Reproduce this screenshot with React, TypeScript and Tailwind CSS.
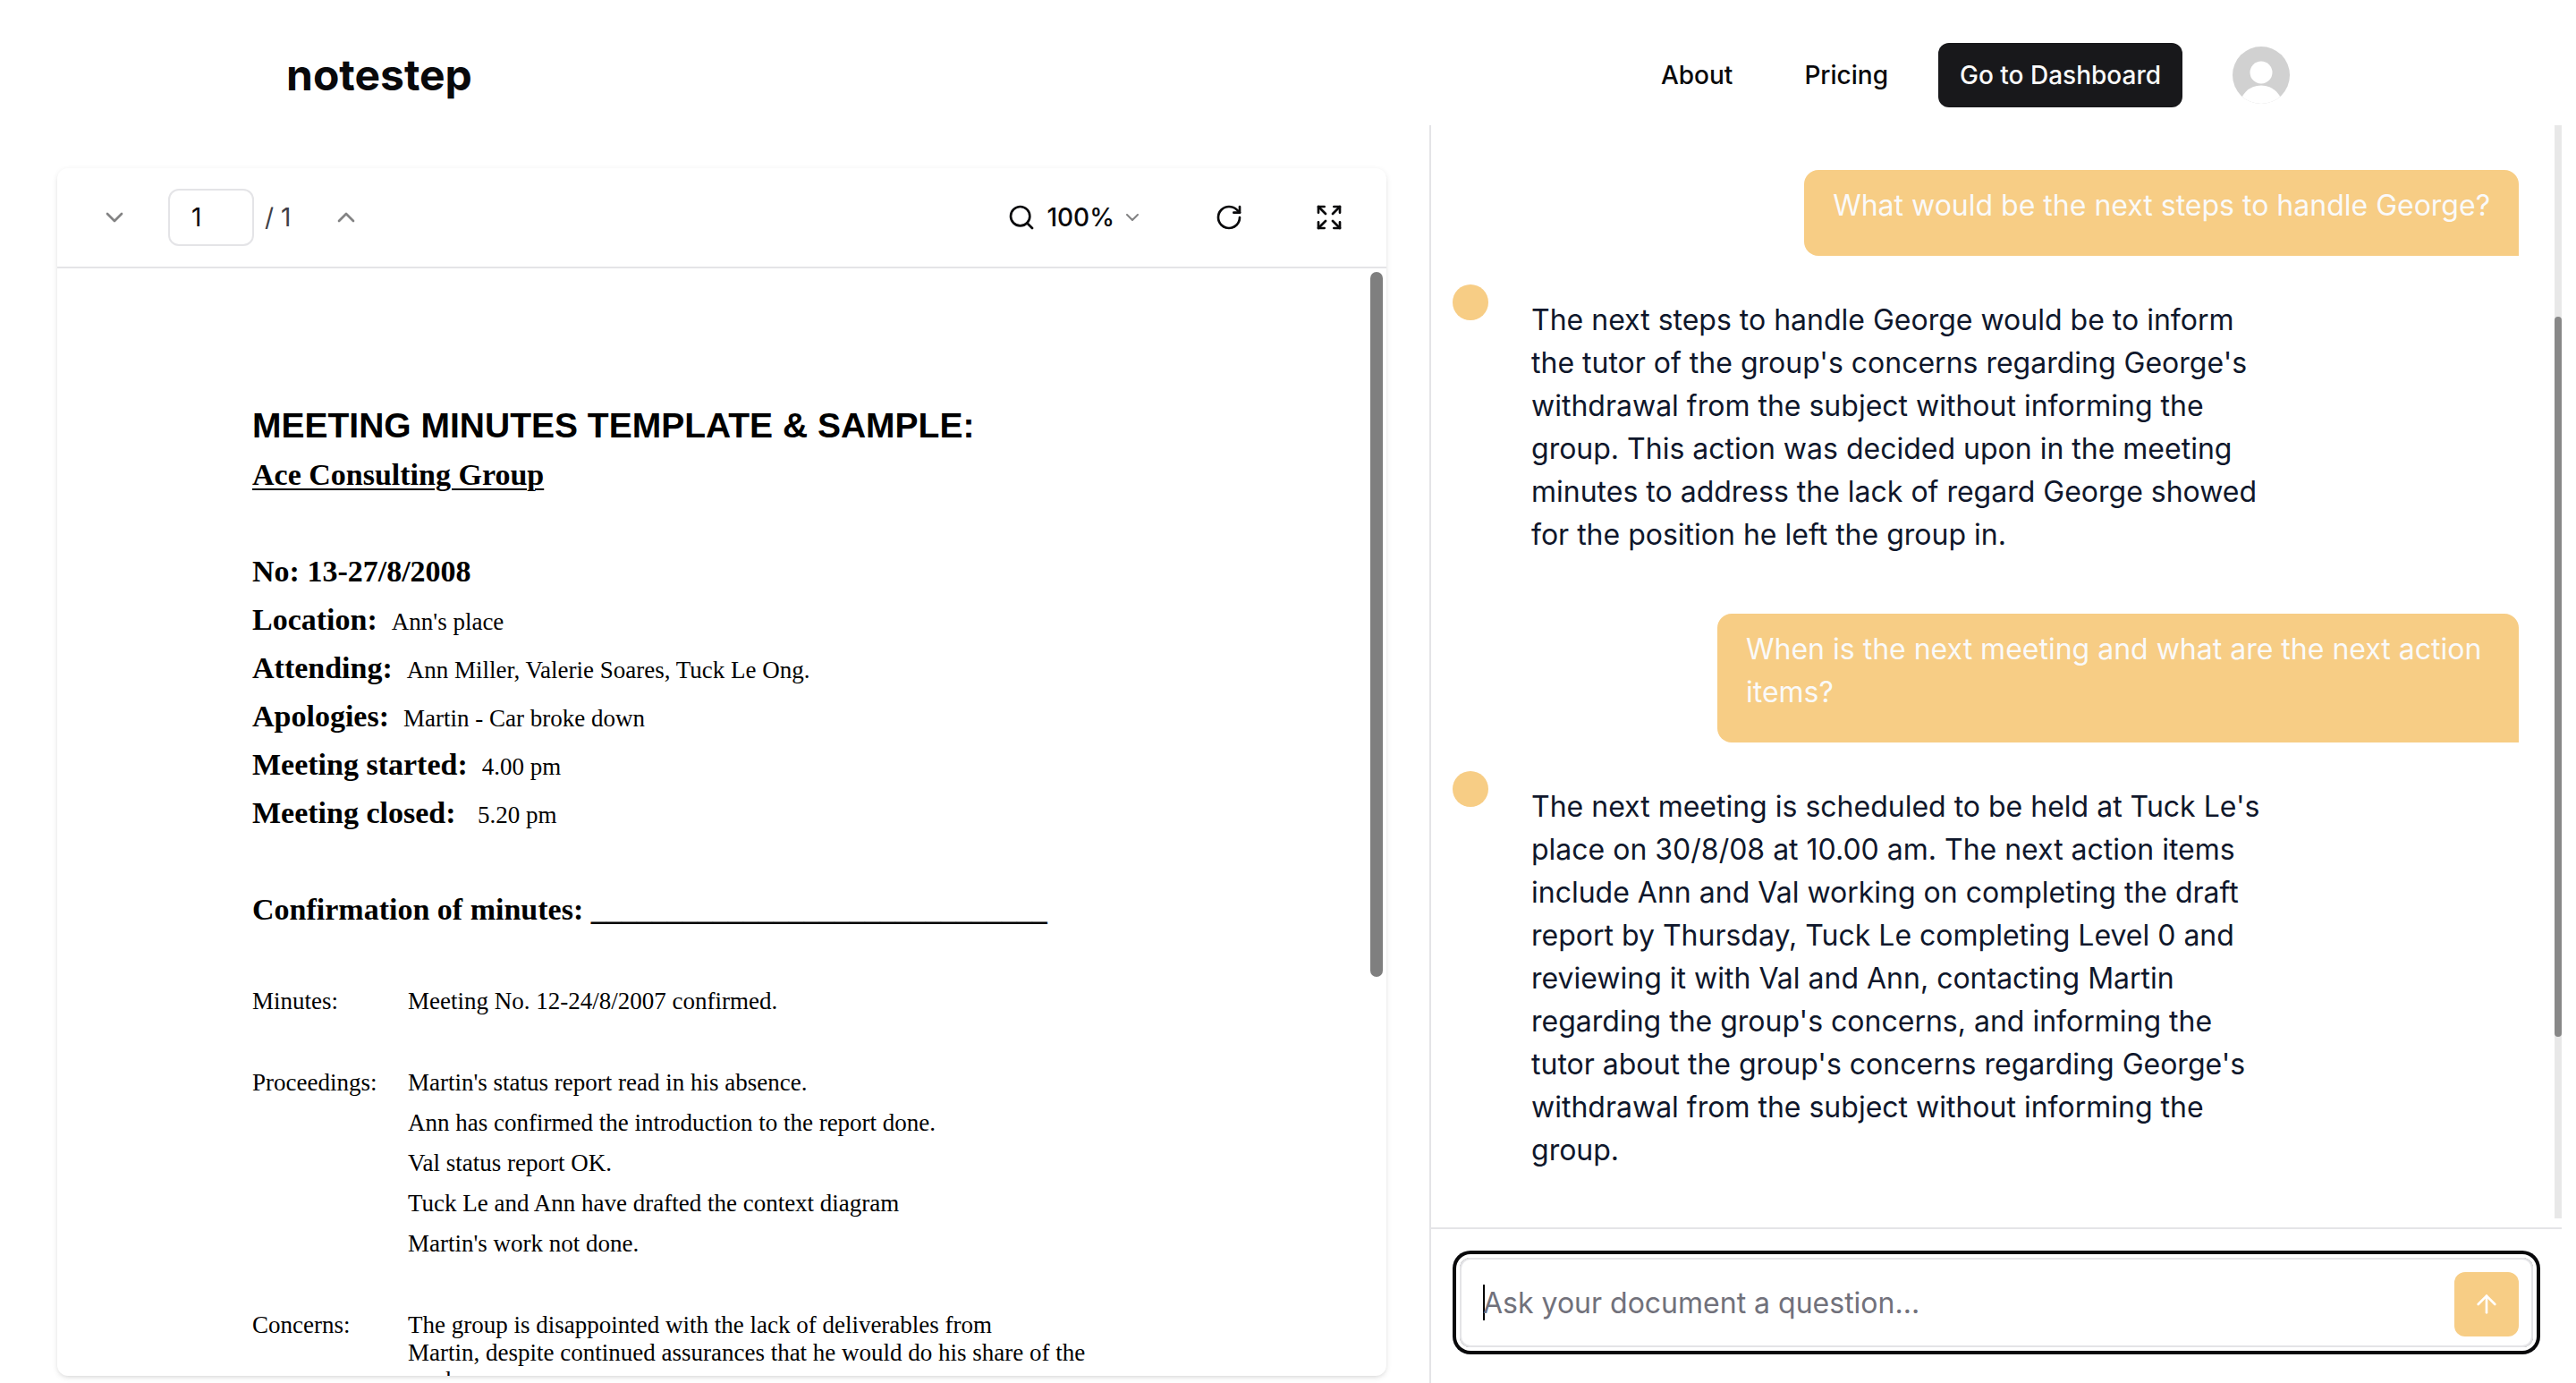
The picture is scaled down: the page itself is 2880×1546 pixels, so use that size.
import { ArrowUp, ChevronDown, ChevronUp, Expand, RotateCw, Search } from "lucide-react";
import type { ReactNode } from "react";

const DETAILS = [
  { label: "Location:", value: "Ann's place" },
  { label: "Attending:", value: "Ann Miller, Valerie Soares, Tuck Le Ong." },
  { label: "Apologies:", value: "Martin - Car broke down" },
  { label: "Meeting started:", value: "4.00 pm" },
  { label: "Meeting closed:\u00a0", value: "5.20 pm" },
];

const PROCEEDINGS = [
  "Martin's status report read in his absence.",
  "Ann has confirmed the introduction to the report done.",
  "Val status report OK.",
  "Tuck Le and Ann have drafted the context diagram",
  "Martin's work not done.",
];

const MESSAGES = [
  { from: "user", text: "What would be the next steps to handle George?" },
  {
    from: "bot",
    text: "The next steps to handle George would be to inform the tutor of the group's concerns regarding George's withdrawal from the subject without informing the group. This action was decided upon in the meeting minutes to address the lack of regard George showed for the position he left the group in.",
  },
  { from: "user", text: "When is the next meeting and what are the next action items?" },
  {
    from: "bot",
    text: "The next meeting is scheduled to be held at Tuck Le's place on 30/8/08 at 10.00 am. The next action items include Ann and Val working on completing the draft report by Thursday, Tuck Le completing Level 0 and reviewing it with Val and Ann, contacting Martin regarding the group's concerns, and informing the tutor about the group's concerns regarding George's withdrawal from the subject without informing the group.",
  },
];

function Header() {
  return (
    <header className="flex shrink-0 items-center justify-between px-80 pt-12 pb-5">
      <a href="#home" className="text-5xl font-bold">notestep</a>
      <nav className="flex items-center gap-14 text-[28px] leading-10 font-medium">
        <a href="#about" className="mr-6">About</a>
        <a href="#pricing">Pricing</a>
        <a href="#dashboard" className="flex h-18 items-center rounded-xl bg-zinc-900 px-6 text-zinc-50">
          Go to Dashboard
        </a>
        <button type="button" aria-label="Account" className="size-16 overflow-hidden rounded-full">
          <svg viewBox="0 0 64 64" className="size-16">
            <rect width="64" height="64" fill="#d1d1d1" />
            <circle cx="32" cy="29" r="12.5" fill="#fff" />
            <circle cx="32" cy="68" r="24.5" fill="#fff" />
          </svg>
        </button>
      </nav>
    </header>
  );
}

function Toolbar() {
  return (
    <div className="flex h-28 shrink-0 items-center justify-between border-b-2 border-zinc-200 px-4 text-[28px] leading-10">
      <div className="flex items-center">
        <button type="button" aria-label="Previous page" className="px-8 opacity-50">
          <ChevronDown size={32} />
        </button>
        <div className="ml-3 flex items-center gap-3">
          <input
            aria-label="Page number"
            defaultValue="1"
            className="h-16 w-24 rounded-xl border-2 border-zinc-200 px-6 outline-none"
          />
          <span className="text-zinc-700">/ 1</span>
        </div>
        <button type="button" aria-label="Next page" className="ml-3.5 px-8 opacity-50">
          <ChevronUp size={32} />
        </button>
      </div>
      <div className="flex items-center gap-4">
        <button type="button" aria-label="Zoom" className="flex items-center px-6 font-medium">
          <Search size={32} />
          <span className="ml-3">100%</span>
          <ChevronDown size={24} className="ml-2 opacity-50" />
        </button>
        <button type="button" aria-label="Rotate 90 degrees" className="pr-8 pl-10">
          <RotateCw size={32} />
        </button>
        <button type="button" aria-label="Fullscreen" className="px-8">
          <Expand size={32} />
        </button>
      </div>
    </div>
  );
}

function Row({ label, children }: { label: string; children: ReactNode }) {
  return (
    <div className="flex items-baseline">
      <dt className="w-[174px] shrink-0">{label}</dt>
      <dd>{children}</dd>
    </div>
  );
}

function Page() {
  return (
    <article className="min-w-0 flex-1 overflow-hidden pt-37 pl-[218px] font-['Liberation_Serif',serif] text-[27px] leading-[45px] whitespace-nowrap text-black">
      <h1 className="font-['Liberation_Sans',sans-serif] text-[39px] leading-[56px] font-bold">
        MEETING MINUTES TEMPLATE &amp; SAMPLE:
      </h1>
      <div className="text-[34px] leading-[54px] font-bold">
        <h2 className="underline decoration-2 underline-offset-4">Ace Consulting Group</h2>
        <p className="mt-[54px]">No: 13-27/8/2008</p>
        {DETAILS.map((d) => (
          <p key={d.label}>
            {d.label}
            <span className="ml-4 text-[27px] leading-none font-normal">{d.value}</span>
          </p>
        ))}
        <p className="mt-[54px]">Confirmation of minutes: ______________________________</p>
      </div>
      <dl className="mt-[53px] flex flex-col gap-[46px]">
        <Row label="Minutes:">Meeting No. 12-24/8/2007 confirmed.</Row>
        <Row label="Proceedings:">
          {PROCEEDINGS.map((line) => (
            <p key={line}>{line}</p>
          ))}
        </Row>
        <Row label="Concerns:">
          <p className="leading-[31px]">
            The group is disappointed with the lack of deliverables from
            <br />
            Martin, despite continued assurances that he would do his share of the
            <br />
            work.
          </p>
        </Row>
      </dl>
    </article>
  );
}

function Chat() {
  return (
    <section className="flex min-w-0 flex-1 flex-col border-l-2 border-zinc-200">
      <div className="flex min-h-0 flex-1">
        <div className="flex flex-1 flex-col gap-8 pt-[50px] pr-10 pl-6">
          {MESSAGES.map((m) =>
            m.from === "user" ? (
              <p
                key={m.text}
                className="max-w-[896px] self-end rounded-2xl rounded-br-none bg-[#f7cd85] px-8 pt-4 pb-8 text-[32px] leading-12 text-zinc-50"
              >
                {m.text}
              </p>
            ) : (
              <div key={m.text} className="flex items-start gap-4">
                <span className="size-10 shrink-0 rounded-full bg-[#f7cd85]" />
                <p className="max-w-[896px] px-8 pt-4 pb-8 text-[32px] leading-12 text-slate-900">{m.text}</p>
              </div>
            ),
          )}
        </div>
        <div className="w-2 bg-[#e8e8e8] pt-[214px]">
          <div className="h-[805px] rounded-full bg-[#888888]" />
        </div>
      </div>
      <form className="mt-2.5 shrink-0 border-t-2 border-zinc-200 px-8 pt-8 pb-10">
        <div className="flex items-center rounded-xl border-2 border-zinc-200 pr-3.5 pl-6 ring-4 ring-zinc-950 ring-offset-4">
          <span className="h-10 w-0.5 shrink-0 bg-black" />
          <input
            aria-label="Question"
            placeholder="Ask your document a question..."
            className="-ml-0.5 h-24 min-w-0 flex-1 text-[32px] leading-12 outline-none placeholder:text-zinc-500"
          />
          <button
            type="button"
            aria-label="Send"
            className="mt-1 flex size-18 items-center justify-center rounded-xl bg-[#f7cd85] text-white"
          >
            <ArrowUp size={32} />
          </button>
        </div>
      </form>
    </section>
  );
}

export default function App() {
  return (
    <div className="flex h-screen flex-col overflow-hidden bg-white font-['Inter',sans-serif] text-zinc-950">
      <Header />
      <main className="flex min-h-0 flex-1 pr-4">
        <div className="w-[1598px] shrink-0 pt-12 pr-12 pb-2 pl-16">
          <section className="flex h-full flex-col overflow-hidden rounded-xl shadow-[0_2px_6px_0_rgba(0,0,0,0.1),0_2px_4px_-2px_rgba(0,0,0,0.1)]">
            <Toolbar />
            <div className="flex min-h-0 flex-1">
              <Page />
              <div className="w-[18px] shrink-0 pt-1 pr-1">
                <div className="h-[788px] rounded-full bg-[#7f7f7f]" />
              </div>
            </div>
          </section>
        </div>
        <Chat />
      </main>
    </div>
  );
}
